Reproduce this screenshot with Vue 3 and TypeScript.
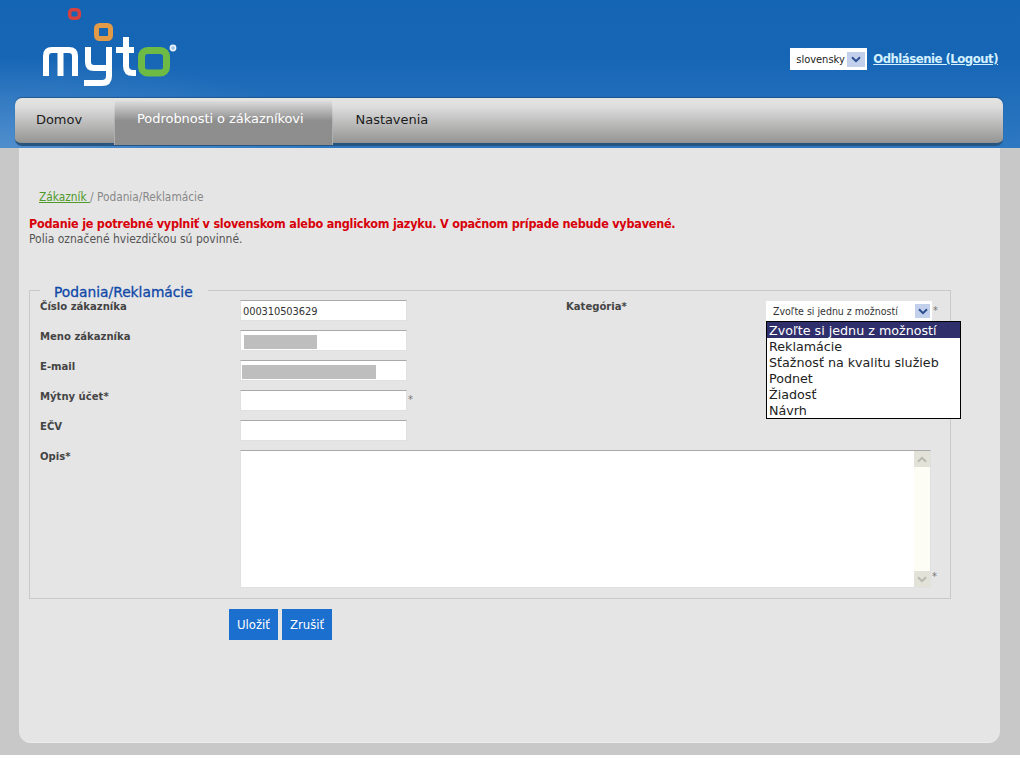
<template>
  <div class="page">
    <header class="top">
      <a class="logo" aria-label="myto">
        <svg width="180" height="90" viewBox="0 0 180 90" fill="none">
          <rect x="69.7" y="9.7" width="9.6" height="8.6" rx="3" stroke="#d6403f" stroke-width="3.5" />
          <rect x="96.5" y="25.5" width="14" height="13" rx="3" stroke="#e09a48" stroke-width="5" />
          <g stroke="#fff" stroke-width="6">
            <path d="M46 76V56Q46 50 52 50H69Q75 50 75 56V76M60.5 50V76" />
            <path d="M88 47V62Q88 68 94 68H109M109 47V76Q109 83 102 83H84" />
            <path d="M126 37V66Q126 73 133 73H136M116 50H134" />
          </g>
          <rect x="141.5" y="50.5" width="25" height="22.5" rx="6" stroke="#6dbb45" stroke-width="7" />
          <circle cx="173" cy="48" r="2.6" fill="#9fc4e6" stroke="#e8f2fa" stroke-width="1.6" />
        </svg>
      </a>
      <div class="top-right">
        <div class="lang">
          <span>{{ language }}</span>
          <span class="arrow-btn">
            <svg width="10" height="7" viewBox="0 0 10 7"><path d="M1 1.2 5 5.2 9 1.2" fill="none" stroke="#2c4f8f" stroke-width="2" /></svg>
          </span>
        </div>
        <a class="logout" href="#">Odhlásenie (Logout)</a>
      </div>
    </header>

    <nav class="menu">
      <a v-for="item in menu" :key="item.label" class="menu-item" :class="{ active: item.active }">{{ item.label }}</a>
    </nav>

    <main class="panel">
      <div class="crumbs"><a href="#">Zákazník </a> / Podania/Reklamácie</div>
      <p class="warning">Podanie je potrebné vyplniť v slovenskom alebo anglickom jazyku. V opačnom prípade nebude vybavené.</p>
      <p class="hint">Polia označené hviezdičkou sú povinné.</p>

      <fieldset class="box">
        <legend>Podania/Reklamácie</legend>
        <div class="form-grid">
          <label class="lbl">Číslo zákazníka</label>
          <div class="field"><input class="inp" type="text" value="000310503629" /></div>
          <label class="lbl">Kategória*</label>
          <div class="field cat">
            <div class="cat-select">
              <span>Zvoľte si jednu z možností</span>
              <span class="arrow-btn">
                <svg width="10" height="7" viewBox="0 0 10 7"><path d="M1 1.2 5 5.2 9 1.2" fill="none" stroke="#2c4f8f" stroke-width="2" /></svg>
              </span>
            </div>
            <span class="star">*</span>
            <ul class="dropdown">
              <li v-for="(opt, i) in categories" :key="opt" :class="{ sel: i === 0 }">{{ opt }}</li>
            </ul>
          </div>

          <label class="lbl">Meno zákazníka</label>
          <div class="field wide"><div class="inp masked"><span class="mask name-mask"></span></div></div>

          <label class="lbl">E-mail</label>
          <div class="field wide"><div class="inp masked"><span class="mask mail-mask"></span></div></div>

          <label class="lbl">Mýtny účet*</label>
          <div class="field wide"><input class="inp" type="text" /><span class="star">*</span></div>

          <label class="lbl">EČV</label>
          <div class="field wide"><input class="inp" type="text" /></div>

          <label class="lbl">Opis*</label>
          <div class="field wide opis">
            <div class="area">
              <textarea></textarea>
              <div class="scroll">
                <span class="sb-btn">
                  <svg width="10" height="7" viewBox="0 0 10 7"><path d="M1 5.8 5 1.8 9 5.8" fill="none" stroke="#b9b9ae" stroke-width="2" /></svg>
                </span>
                <span class="sb-btn">
                  <svg width="10" height="7" viewBox="0 0 10 7"><path d="M1 1.2 5 5.2 9 1.2" fill="none" stroke="#b9b9ae" stroke-width="2" /></svg>
                </span>
              </div>
            </div>
            <span class="star">*</span>
          </div>
        </div>
      </fieldset>

      <div class="actions">
        <button type="button" class="btn">Uložiť</button>
        <button type="button" class="btn">Zrušiť</button>
      </div>
    </main>
  </div>
</template>

<script setup lang="ts">
interface MenuItem {
  label: string
  active?: boolean
}

const language = 'slovensky'

const menu: MenuItem[] = [
  { label: 'Domov' },
  { label: 'Podrobnosti o zákazníkovi', active: true },
  { label: 'Nastavenia' }
]

const categories: string[] = [
  'Zvoľte si jednu z možností',
  'Reklamácie',
  'Sťažnosť na kvalitu služieb',
  'Podnet',
  'Žiadosť',
  'Návrh'
]
</script>

<style>
html,
body {
  margin: 0;
  background: #fff;
}
</style>

<style scoped>
.page {
  height: 755px;
  background: #c8c8c8;
  font-family: "DejaVu Sans Condensed", "DejaVu Sans", sans-serif;
  font-size: 12px;
  overflow: hidden;
}

.top {
  height: 148px;
  margin-bottom: -50px;
  padding-right: 22px;
  box-sizing: border-box;
  display: flex;
  justify-content: space-between;
  background:
    radial-gradient(ellipse 340px 90px at 0 148px, rgba(120, 170, 220, 0.45), rgba(120, 170, 220, 0)),
    linear-gradient(180deg, #1565b5 0, #1766b6 60px, #2e78c1 148px);
}

.logo {
  display: block;
  height: 90px;
}

.top-right {
  display: flex;
  align-items: flex-start;
  gap: 6px;
  padding-top: 48px;
}

.lang {
  width: 77px;
  height: 22px;
  box-sizing: border-box;
  padding: 0 2px 0 6px;
  background: #fff;
  color: #222;
  font-size: 11px;
  display: flex;
  align-items: center;
  justify-content: space-between;
}

.arrow-btn {
  width: 18px;
  height: 15px;
  background: #c3d0ec;
  display: flex;
  align-items: center;
  justify-content: center;
}

.logout {
  margin-top: 3px;
  color: #d3f0ff;
  font-size: 13px;
  font-weight: 700;
  letter-spacing: -0.5px;
}

.menu {
  position: relative;
  z-index: 1;
  height: 48px;
  margin: 0 17px 0 15px;
  box-sizing: border-box;
  display: flex;
  border-radius: 7px;
  border-bottom: 3px solid #27557f;
  box-shadow: 0 -1px 1px rgba(20, 60, 100, 0.5);
  background: linear-gradient(180deg, #e4e4e2 0, #dedede 18%, #949493 100%);
  font-family: "DejaVu Sans", sans-serif;
  font-size: 13px;
  color: #1c1c1c;
}

.menu-item {
  padding: 5px 32px 0 21px;
  line-height: 30px;
  height: 38px;
  margin-top: 2px;
  letter-spacing: -0.05px;
}

.menu-item.active {
  padding: 3px 28px 0 22px;
  color: #fff;
  height: 41px;
  margin-top: 3px;
  border-left: 1px solid rgba(255, 255, 255, 0.3);
  border-right: 1px solid rgba(255, 255, 255, 0.3);
  background: linear-gradient(180deg, #dcdcdc 0, #8e8e8e 45%, #8d8d8d 100%);
}

.menu-item.active + .menu-item {
  padding-left: 23px;
}

.panel {
  height: 595px;
  margin: 2px 20px 0 19px;
  padding: 41px 10px 0;
  box-sizing: border-box;
  background: #e5e5e5;
  border-bottom: 1px solid #ececec;
  border-radius: 0 0 12px 12px;
  color: #444;
}

.crumbs {
  padding-left: 10px;
  height: 16px;
  line-height: 16px;
  font-size: 11.8px;
  color: #888;
}

.crumbs a {
  color: #4f9a2a;
}

.warning {
  margin: 11px 0 -1px;
  line-height: 16px;
  font-size: 12.5px;
  letter-spacing: -0.23px;
  font-weight: 700;
  color: #d8000a;
}

.hint {
  margin: 0;
  line-height: 16px;
  color: #555;
}

.box {
  margin: 33px 39px 0 0;
  padding: 0 0 10px 10px;
  border: 1px solid #c9c9c9;
  min-inline-size: 0;
}

legend {
  margin-left: 0;
  padding: 4px 15px 0 14px;
  height: 20px;
  box-sizing: border-box;
  line-height: 16px;
  font-family: "DejaVu Sans", sans-serif;
  font-size: 13.8px;
  font-weight: 400;
  color: #0f48a8;
  -webkit-text-stroke: 0.3px #0f48a8;
}

.form-grid {
  display: grid;
  grid-template-columns: 200px 326px 200px 1fr;
  grid-template-rows: repeat(5, 30px) auto;
}

.lbl {
  font-size: 11.2px;
  font-weight: 700;
  color: #444;
  line-height: 14px;
}

.field {
  display: flex;
  align-items: flex-start;
  position: relative;
}

.wide {
  grid-column: 2 / 5;
}

.inp {
  width: 167px;
  height: 21px;
  box-sizing: border-box;
  margin: 0;
  padding: 1px 2px 0;
  border: 1px solid #e0e0e0;
  border-top-color: #a9a9a9;
  background: #fff;
  font: inherit;
  font-size: 11px;
  letter-spacing: -0.1px;
  color: #333;
  outline: none;
}

.masked {
  padding: 4px 0 0 1px;
}

.mask {
  display: block;
  height: 14px;
  background: #bebebe;
}

.name-mask {
  width: 73px;
  margin-left: 2px;
}

.mail-mask {
  width: 134px;
  margin-left: 0;
}

.star {
  margin-left: 1px;
  color: #777;
  line-height: 16px;
  padding-top: 2px;
  font-size: 11px;
}

.cat {
  padding-top: 1px;
}

.cat-select {
  width: 166px;
  height: 20px;
  box-sizing: border-box;
  padding: 0 2px 0 7px;
  background: #fff;
  color: #333;
  font-size: 10.5px;
  display: flex;
  align-items: center;
  justify-content: space-between;
}

.cat-select .arrow-btn {
  width: 15px;
  height: 14px;
}

.dropdown {
  position: absolute;
  left: 0;
  top: 21px;
  z-index: 2;
  width: 195px;
  margin: 0;
  padding: 0;
  box-sizing: border-box;
  list-style: none;
  background: #fff;
  border: 1px solid #000;
  font-family: "DejaVu Sans", sans-serif;
  font-size: 12.7px;
  color: #222;
}

.dropdown li {
  height: 16px;
  line-height: 18px;
  padding-left: 2px;
}

.dropdown .sel {
  background: #2f2f6b;
  color: #fff;
}

.area {
  width: 691px;
  height: 138px;
  box-sizing: border-box;
  display: flex;
  background: #fff;
  border: 1px solid #e0e0e0;
  border-top-color: #a9a9a9;
}

.area textarea {
  flex: 1;
  border: 0;
  padding: 2px;
  resize: none;
  outline: none;
  background: #fff;
}

.scroll {
  width: 16px;
  display: flex;
  flex-direction: column;
  justify-content: space-between;
  background: #fdfdf6;
}

.sb-btn {
  height: 16px;
  background: #e2e2d8;
  display: flex;
  align-items: center;
  justify-content: center;
}

.opis .star {
  align-self: flex-end;
  padding-bottom: 3px;
}

.actions {
  display: flex;
  gap: 4px;
  margin: 10px 0 0 200px;
}

.btn {
  height: 31px;
  padding: 0 8px;
  border: 0;
  background: #1a6fcf;
  color: #fff;
  font: inherit;
  font-size: 13px;
}
</style>
